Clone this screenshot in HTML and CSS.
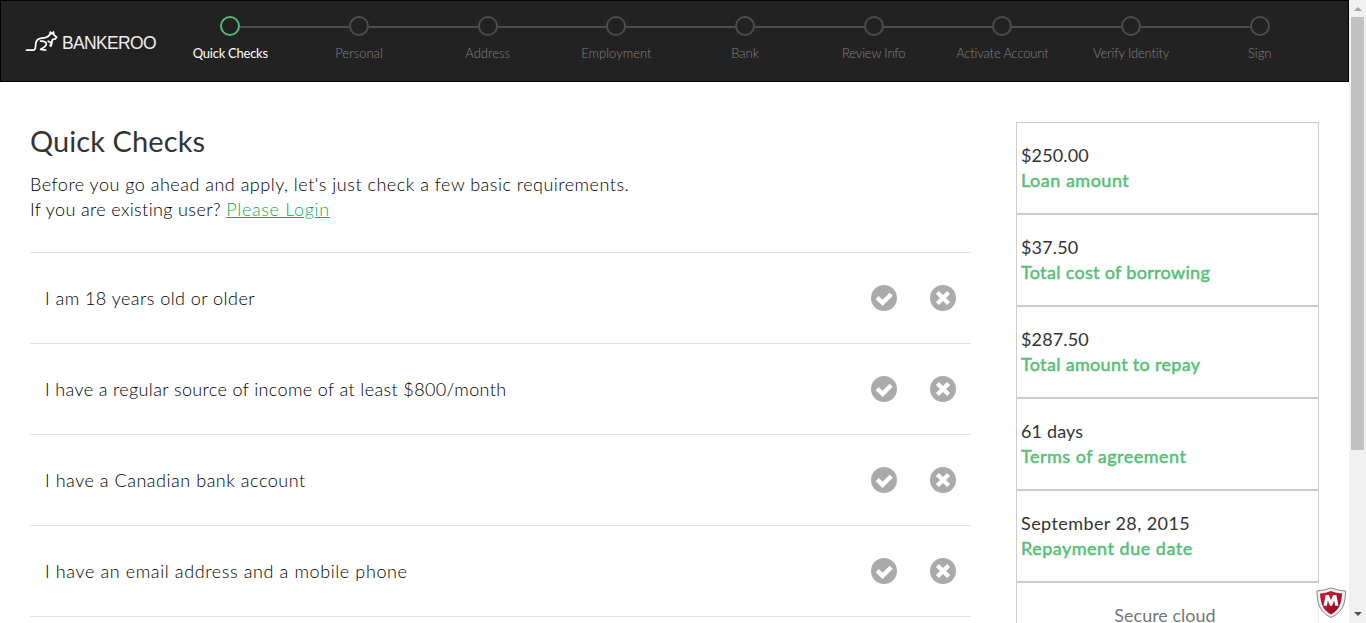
FILE: index.html
```
<!DOCTYPE html>
<html lang="en">
<head>
<meta charset="utf-8">
<title>Bankeroo - Quick Checks</title>
<link rel="stylesheet" href="styles.css">
</head>
<body>
<svg class="defs" width="0" height="0">
  <symbol id="yes" viewBox="0 0 26 26"><circle cx="13" cy="13" r="13" fill="#aaa"/><path d="M6.200 12.600l5.400 5.300 8.600-8.600" fill="none" stroke="#fff" stroke-width="4.400"/></symbol>
  <symbol id="no" viewBox="0 0 26 26"><circle cx="13" cy="13" r="13" fill="#aaa"/><path d="M8.900 8.900l8.200 8.200m0-8.200l-8.200 8.200" fill="none" stroke="#fff" stroke-width="4.200" stroke-linecap="square"/></symbol>
</svg>
<div class="page">
  <header class="header">
    <a class="logo">
      <svg width="36" height="26" viewBox="24 28 36 26" fill="none" stroke="#fff" stroke-width="1.700" stroke-linejoin="round" stroke-linecap="round"><path d="M26.500 50.200h6.200c2.400 0 2.900-2 2.900-4.800 0-4.400 2.200-7 6.200-7.200 3.800-.1 5.600-.6 8-3.600l.5-2.400 1.700 1.700 1.400-2 .5 3 2.800 2.200-1.500 1.800-2.900.7c-.2 2.300-.7 4.700-2.200 5.900m-9.600-4.300c3.300-.6 6.500 1 5.700 3.700-.9 2.400-3.400 3.100-5.600 4.400l5 .9M48.200 41.200l3.700 2-1 3"/></svg>
      <span class="brand">BANKEROO</span>
    </a>
    <ol class="steps">
      <li class="step active"><i></i><span>Quick Checks</span></li>
      <li class="step"><i></i><span>Personal</span></li>
      <li class="step"><i></i><span>Address</span></li>
      <li class="step"><i></i><span>Employment</span></li>
      <li class="step"><i></i><span>Bank</span></li>
      <li class="step tight"><i></i><span>Review Info</span></li>
      <li class="step tight"><i></i><span>Activate Account</span></li>
      <li class="step tight"><i></i><span>Verify Identity</span></li>
      <li class="step"><i></i><span>Sign</span></li>
    </ol>
  </header>
  <div class="content">
    <main class="main">
      <h1>Quick Checks</h1>
      <p class="intro"><span class="lead">Before you go ahead and apply, let's just check a few basic requirements.</span><br><span class="existing">If you are existing user? </span><a href="#">Please Login</a></p>
      <ul class="checks">
        <li><span class="age">I am 18 years old or older</span><svg><use href="#yes"/></svg><svg><use href="#no"/></svg></li>
        <li><span class="income">I have a regular source of income of at least $800/month</span><svg><use href="#yes"/></svg><svg><use href="#no"/></svg></li>
        <li><span class="account">I have a Canadian bank account</span><svg><use href="#yes"/></svg><svg><use href="#no"/></svg></li>
        <li><span class="contact">I have an email address and a mobile phone</span><svg><use href="#yes"/></svg><svg><use href="#no"/></svg></li>
        <li></li>
      </ul>
    </main>
    <aside class="summary">
      <div class="card"><span>$250.00</span><b>Loan amount</b></div>
      <div class="card total"><span>$37.50</span><b>Total cost of borrowing</b></div>
      <div class="card total"><span>$287.50</span><b>Total amount to repay</b></div>
      <div class="card"><span>61 days</span><b>Terms of agreement</b></div>
      <div class="card wide"><span>September 28, 2015</span><b>Repayment due date</b></div>
      <div class="secure">Secure cloud</div>
    </aside>
  </div>
</div>
<div class="scrollbar"><i class="up"></i><i class="thumb"></i><i class="down"></i></div>
<svg class="shield" width="32" height="32" viewBox="0 0 32 32">
  <defs><linearGradient id="red" x2="1" y2="1"><stop offset="0" stop-color="#c8203a"/><stop offset=".5" stop-color="#b5122f"/><stop offset="1" stop-color="#7d0a1c"/></linearGradient></defs>
  <path d="M2 4Q9 3.500 16 1q7 2.500 14.500 3c0 13-3 21-14.500 26.500C5 25 2 17 2 4z" fill="#eef0f2" stroke="#7e8a92"/>
  <path d="M5 6.500Q11 6 16 4q5 2 11 2.500C26.500 17 24 23 16 27.500 8 23 5.500 17 5 6.500z" fill="url(#red)"/>
  <path d="M8.500 18.800l2.200-10.800h3.200l2.100 5.200 2.100-5.200h3.200l2.200 10.800h-3.400l-.9-5.200-2.200 5.200h-2l-2.200-5.200-.9 5.200z" fill="#fff"/>
</svg>
</body>
</html>
```
FILE: styles.css
```
* { box-sizing: border-box; }
body { margin: 0; height: 623px; overflow: hidden; display: flex; background: #fff; color: #333; font-family: Lato, "Open Sans", sans-serif; }
ol, ul { list-style: none; margin: 0; padding: 0; }
.defs { position: absolute; }
.page { width: 1349px; height: 623px; overflow: hidden; }
.header { height: 82px; background: #222; border: 1px solid #000; display: flex; }
.logo { width: 165px; padding: 27px 0 0 23px; display: flex; }
.brand { color: #eee; font: 17.5px/26px "Liberation Sans", Arial, sans-serif; margin-left: 2px; padding-top: 2px; letter-spacing: -.65px; }
.steps { display: flex; width: 1158px; }
.step { flex: 1; display: flex; flex-direction: column; align-items: center; position: relative; padding-top: 15px; color: #828282; font-size: 13px; font-weight: 300; line-height: 20px; white-space: nowrap; }
.step i { width: 20px; height: 20px; border: 2px solid #4d4d4d; border-radius: 50%; margin-bottom: 7px; }
.step.active { color: #fff; font-weight: 400; letter-spacing: -.25px; }
.step.tight { letter-spacing: -.17px; }
.step.active i { border-color: #55b877; }
.step:not(:last-child)::after { content: ""; position: absolute; top: 25px; left: calc(50% + 10px); width: calc(100% - 20px); height: 2px; background: #4d4d4d; }
.content { display: flex; padding: 40px 30px 0; justify-content: space-between; }
.main { width: 941px; }
h1 { margin: 0; font-size: 29px; line-height: 38px; font-weight: 400; letter-spacing: .08px; }
.intro { margin: 12px 0 30px; font-size: 18px; line-height: 25px; font-weight: 300; white-space: nowrap; color: #000; }
.lead { letter-spacing: .5px; }
.existing { letter-spacing: .37px; }
.intro a { color: #00b158; letter-spacing: .66px; }
.checks li { height: 91px; border-top: 1px solid #e1e1e1; display: flex; align-items: center; gap: 33px; padding: 0 15px 1px; font-size: 18px; font-weight: 300; color: #000; }
.checks span { margin-right: auto; padding-top: 1px; }
.age { letter-spacing: .46px; }
.income { letter-spacing: .37px; }
.account { letter-spacing: .53px; }
.contact { letter-spacing: .61px; }
.checks svg { width: 26px; height: 26px; }
.summary { width: 303px; }
.card { height: 92px; border: 1px solid #ccc; padding: 20px 4px; display: flex; flex-direction: column; align-items: flex-start; font-size: 18px; line-height: 25px; }
.card span { letter-spacing: .15px; }
.card.wide span { letter-spacing: .42px; }
.card b { color: #55c176; font-weight: 400; letter-spacing: .5px; -webkit-text-stroke: .5px #55c176; }
.card.total b { letter-spacing: .32px; }
.secure { height: 92px; border: 1px solid #eee; border-left-color: #ccc; border-top-color: #ccc; padding-top: 19px; padding-right: 5px; text-align: center; color: #777; font-size: 18px; line-height: 26px; }
.scrollbar { width: 17px; height: 623px; background: #f1f1f1; display: flex; flex-direction: column; align-items: center; padding: 7px 0 7px; }
.up, .down { border: 4px solid transparent; border-top: 0; border-bottom-color: #a3a3a3; }
.down { border-top: 4px solid #505050; border-bottom: 0; margin-top: auto; }
.thumb { width: 13px; height: 433px; margin-top: 6px; background: #c1c1c1; }
.shield { position: absolute; left: 1315px; top: 587px; }
```
